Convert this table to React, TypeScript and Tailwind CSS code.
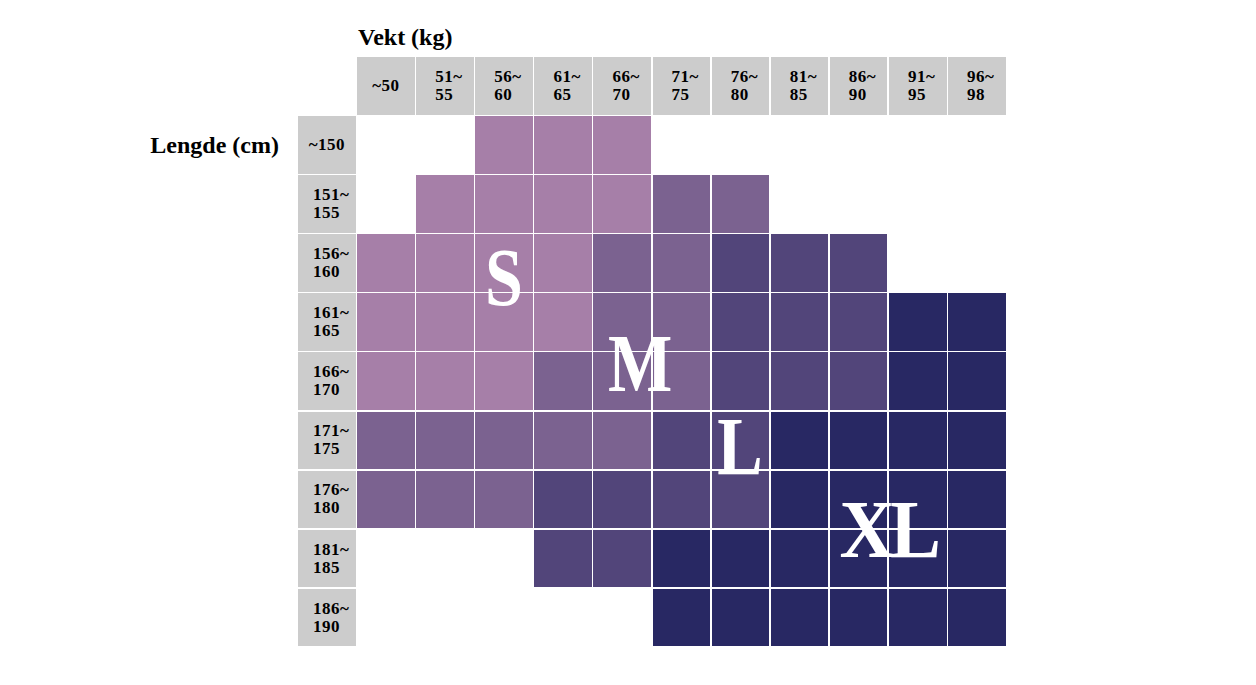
import React from "react";

const colHeads: string[][] = [
  ["~50"],
  ["51~", "55"],
  ["56~", "60"],
  ["61~", "65"],
  ["66~", "70"],
  ["71~", "75"],
  ["76~", "80"],
  ["81~", "85"],
  ["86~", "90"],
  ["91~", "95"],
  ["96~", "98"],
];

const rows: { head: string[]; cells: string }[] = [
  { head: ["~150"], cells: "..SSS......" },
  { head: ["151~", "155"], cells: ".SSSSMM...." },
  { head: ["156~", "160"], cells: "SSSSMMLLL.." },
  { head: ["161~", "165"], cells: "SSSSMMLLLXX" },
  { head: ["166~", "170"], cells: "SSSMMMLLLXX" },
  { head: ["171~", "175"], cells: "MMMMMLLXXXX" },
  { head: ["176~", "180"], cells: "MMMLLLLXXXX" },
  { head: ["181~", "185"], cells: "...LLXXXXXX" },
  { head: ["186~", "190"], cells: ".....XXXXXX" },
];

const colorOf: Record<string, string> = {
  S: "bg-[#a67fa8]",
  M: "bg-[#7b6290]",
  L: "bg-[#52457a]",
  X: "bg-[#282863]",
  ".": "bg-white",
};

function HeadCell({ lines, pad }: { lines: string[]; pad: "col" | "row" }) {
  if (lines.length === 1) {
    return (
      <div className="bg-[#cccccc] flex items-center justify-center text-[17px] leading-[18px] font-bold text-black tracking-[0.5px]">
        {lines[0]}
      </div>
    );
  }
  return (
    <div
      className={
        "bg-[#cccccc] flex items-center text-[17px] leading-[18px] font-bold text-black tracking-[0.5px] " +
        (pad === "col" ? "pl-[19px]" : "pl-[15px]")
      }
    >
      <div className="flex flex-col">
        <span>{lines[0]}</span>
        <span>{lines[1]}</span>
      </div>
    </div>
  );
}

export default function App() {
  return (
    <div
      className="w-[1256px] h-[685px] bg-white overflow-hidden pt-[25px]"
      style={{ fontFamily: '"Liberation Serif", "Times New Roman", serif' }}
    >
      <div className="pl-[358px] text-[24px] leading-[24px] font-bold text-black">
        Vekt (kg)
      </div>
      <div className="flex mt-[8px]">
        <div className="w-[298px] flex flex-col items-end pr-[19px] pt-[59px]">
          <div className="h-[57px] flex items-center text-[24px] leading-[24px] font-bold text-black whitespace-nowrap">
            Lengde (cm)
          </div>
        </div>
        <div className="relative grid grid-cols-[repeat(12,57.6px)] grid-rows-[repeat(10,57.6px)] gap-[1.5px]">
          <div className="bg-white" />
          {colHeads.map((h, i) => (
            <HeadCell key={"c" + i} lines={h} pad="col" />
          ))}
          {rows.map((r, ri) => (
            <React.Fragment key={"r" + ri}>
              <HeadCell lines={r.head} pad="row" />
              {r.cells.split("").map((c, ci) => (
                <div key={ci} className={colorOf[c]} />
              ))}
            </React.Fragment>
          ))}

          <div className="absolute left-[206px] top-[179px] -translate-x-1/2 scale-x-[0.82] text-[83px] leading-none font-bold text-white">
            S
          </div>
          <div className="absolute left-[342px] top-[265px] -translate-x-1/2 scale-x-[0.82] text-[83px] leading-none font-bold text-white">
            M
          </div>
          <div className="absolute left-[442px] top-[348px] -translate-x-1/2 scale-x-[0.82] text-[83px] leading-none font-bold text-white">
            L
          </div>
          <div className="absolute left-[590px] top-[431px] -translate-x-1/2 scale-x-[0.92] text-[83px] leading-none font-bold text-white tracking-[-5px] whitespace-nowrap">
            XL
          </div>
        </div>
      </div>
    </div>
  );
}
